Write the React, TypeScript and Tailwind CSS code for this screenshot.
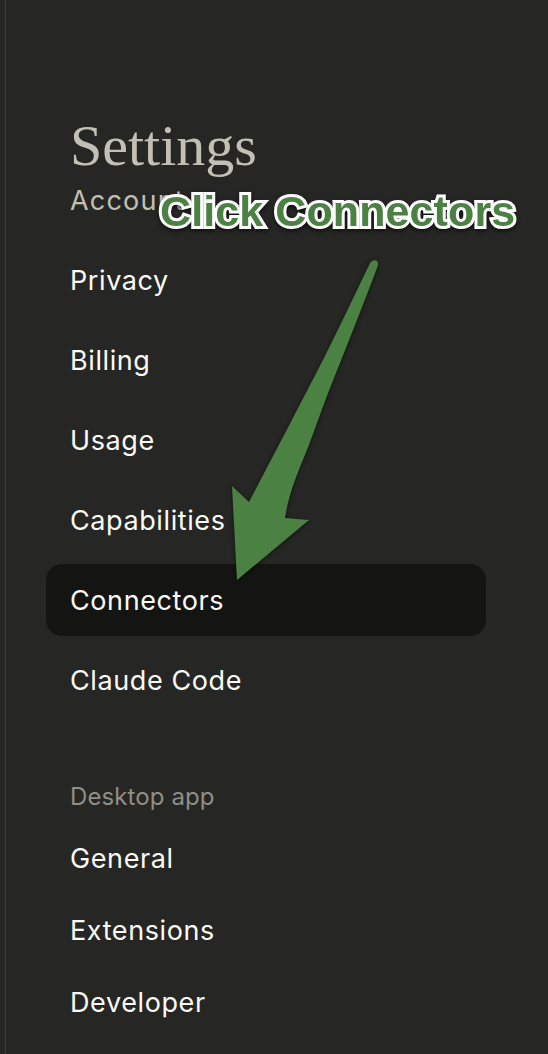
const accountItems = ['Privacy', 'Billing', 'Usage', 'Capabilities', 'Connectors', 'Claude Code'];
const desktopItems = ['General', 'Extensions', 'Developer'];

function Arrow() {
  return (
    <svg className="absolute left-[225px] top-[255px] drop-shadow-[0_1px_2px_rgba(0,0,0,0.5)]" width="160" height="330" viewBox="225 255 160 330">
      <path
        d="M237 580 L232 486 L249 502 C275 452 300 405 326 354 C342 322 356 292 370 263 Q373 259 377 261 Q379 264 377 268 C362 308 347 345 332 383 C322 408 314 432 307 450 C298 472 289 492 285 518 L309 520 Z"
        fill="#4c8144"
      />
    </svg>
  );
}

export default function App() {
  return (
    <div className="relative h-[1054px] w-[548px] overflow-hidden bg-[#262624] font-['Inter',sans-serif] text-[#fafaf7]">
      <div className="absolute left-[5px] top-0 h-full w-px bg-[#3d3d3a]" />

      <div className="flex flex-col pl-[46px] pr-[62px] pt-[118px]">
        <h1 className="pl-[24px] font-['Liberation_Serif',serif] text-[58px] leading-[56px] text-[#c2c0b6]">Settings</h1>
        <div className="mt-[9px] pl-[24px] text-[27px] leading-[36px] tracking-[1.2px] text-[#c2c0b6]">Account</div>

        <div className="mt-[25px] flex flex-col gap-[8px]">
          {accountItems.map((item) => (
            <div
              key={item}
              className={`flex h-[72px] items-center rounded-[16px] pl-[24px] pt-[2px] text-[27px] tracking-[0.6px] ${
                item === 'Connectors' ? 'bg-[#141413]' : ''
              }`}
            >
              {item}
            </div>
          ))}
        </div>

        <div className="mt-[64px] pl-[24px] text-[24px] leading-[34px] tracking-[0.1px] text-[#8f8e87]">Desktop app</div>

        <div className="mt-[9px] flex flex-col">
          {desktopItems.map((item) => (
            <div key={item} className="flex h-[72px] items-center pl-[24px] text-[27px] tracking-[0.6px]">
              {item}
            </div>
          ))}
        </div>
      </div>

      <Arrow />
      <div className="absolute left-[160px] top-[185px] whitespace-nowrap font-['Liberation_Sans',sans-serif] text-[43px] font-bold leading-[52px] tracking-[0.1px] text-[#4c8144] [-webkit-text-stroke:6px_white] [paint-order:stroke_fill] drop-shadow-[0_2px_2px_rgba(0,0,0,0.6)]">
        Click Connectors
      </div>
    </div>
  );
}
